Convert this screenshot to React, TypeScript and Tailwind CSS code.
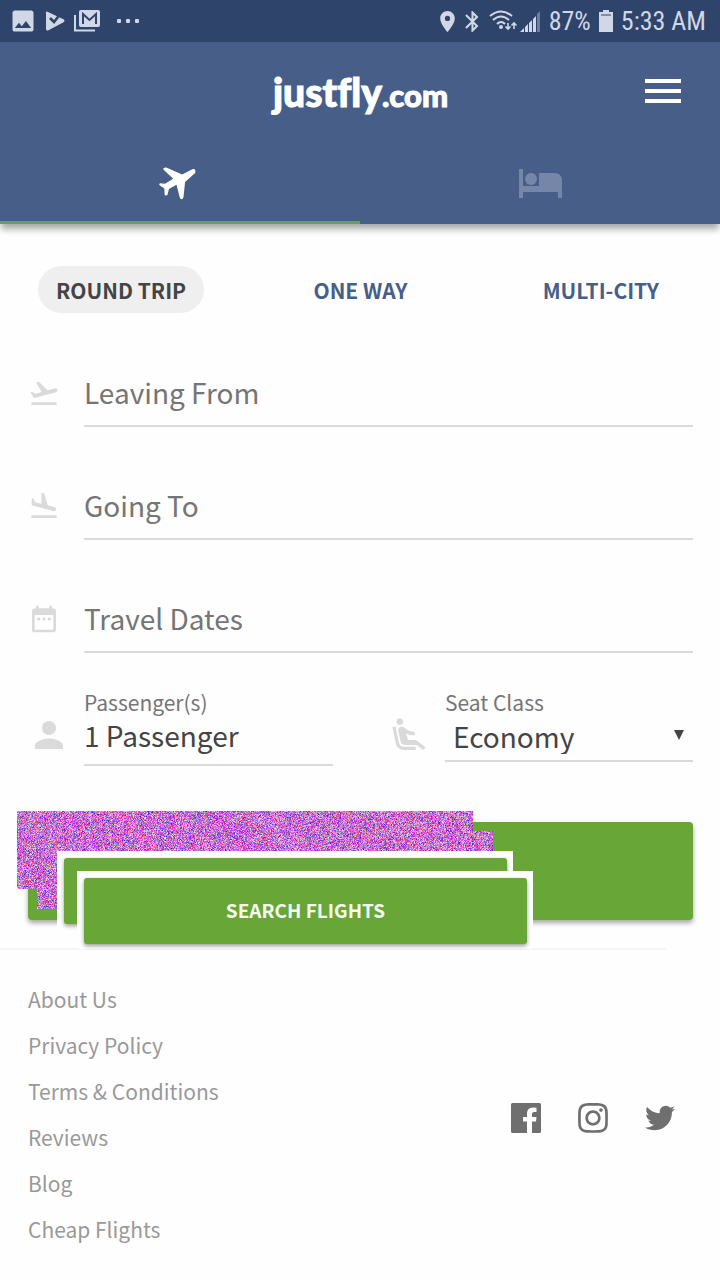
import { useEffect, useRef } from "react";
import type { ReactNode } from "react";
import {
  MdAirlineSeatReclineExtra,
  MdBluetooth,
  MdDateRange,
  MdFlightLand,
  MdFlightTakeoff,
  MdImage,
  MdLocationOn,
  MdPerson,
} from "react-icons/md";
import { FaInstagram, FaTwitter } from "react-icons/fa";

const sourceFont = "font-['Noto_Sans_CJK_SC','Noto_Sans',sans-serif]";

function Noise({ className }: { className: string }) {
  const ref = useRef<HTMLCanvasElement>(null);
  useEffect(() => {
    const canvas = ref.current;
    const ctx = canvas?.getContext("2d");
    if (!canvas || !ctx) return;
    let seed = 1234567;
    const random = () => {
      seed = (seed * 1664525 + 1013904223) >>> 0;
      return seed / 4294967296;
    };
    const image = ctx.createImageData(canvas.width, canvas.height);
    for (let i = 0; i < image.data.length; i += 4) {
      const red = 245 - 190 * random() * random();
      const blue = 245 - 150 * random() * random();
      image.data[i] = red;
      image.data[i + 1] = Math.min(red, blue) * (0.25 + 0.75 * random());
      image.data[i + 2] = blue;
      image.data[i + 3] = 255;
    }
    ctx.putImageData(image, 0, 0);
  }, []);
  return <canvas ref={ref} width={456} height={78} aria-hidden="true" className={className} />;
}

function StatusBar() {
  return (
    <div className="flex h-[42px] items-center bg-[#2f446a] pl-3 pr-[14px] font-['Roboto_Condensed',Roboto,sans-serif] text-[26px] leading-7 text-[#d0d7e6]">
      <MdImage className="-ml-[3px] size-7" />
      <svg viewBox="0 0 20 20" className="ml-2 size-5" fill="currentColor">
        <path d="M1 1Q1 0 3 1L19 8.500Q20 10 19 11L3 19.500Q1 20 1 18Z" />
        <path d="m5 7 4 4 7-9" fill="none" stroke="#2f446a" strokeWidth="2.600" />
      </svg>
      <svg viewBox="0 0 26 22" className="ml-[9px] h-[22px] w-[26px]" fill="none" stroke="currentColor">
        <path d="M1 5v15.500h20" strokeWidth="2" />
        <path d="M7 0h17q2 0 2 2v13q0 2-2 2H7q-2 0-2-2V2q0-2 2-2Z" fill="currentColor" stroke="none" />
        <path d="M9 14V4l6.500 6L22 4v10" stroke="#2f446a" strokeWidth="2" />
      </svg>
      <svg viewBox="0 0 24 6" className="ml-4 h-[6px] w-6" fill="currentColor">
        <rect x="1" y="1" width="4" height="4" rx="1" />
        <rect x="10" y="1" width="4" height="4" rx="1" />
        <rect x="19" y="1" width="4" height="4" rx="1" />
      </svg>
      <div className="ml-auto flex items-center">
        <MdLocationOn className="size-[25px]" />
        <MdBluetooth className="size-[25px]" />
        <svg viewBox="0 0 30 24" className="ml-1 h-6 w-[30px]" fill="none" stroke="currentColor" strokeWidth="2">
          <path d="M1 7q11-9 22 0M4 11q8-7 16 0M8 15q4-4 8 0" />
          <circle cx="12" cy="18" r="2" fill="currentColor" stroke="none" />
          <path d="M19 14v6m-2.500-2.500L19 20l2.500-2.500M25 20v-6m-2.500 2.500L25 14l2.500 2.500" strokeWidth="1.600" />
        </svg>
        <svg viewBox="0 0 22 22" className="h-[22px] w-[22px]" fill="currentColor">
          <path d="m1 22 4-4v4ZM6 22v-5l3-3v8ZM10 22v-9l3-3v12ZM14 22V9l3-3v16Z" />
          <path d="M18 22V4l3-3v21Z" opacity=".4" />
        </svg>
        <span className="ml-2">87%</span>
        <svg viewBox="0 0 14 22" className="mx-2 h-[22px] w-[14px]" fill="currentColor">
          <path d="M4 0h6v2h4v20H0V2h4Z" />
          <path d="M2 5h10" stroke="#2f446a" strokeWidth="1" />
        </svg>
        <span>5:33 AM</span>
      </div>
    </div>
  );
}

function Header() {
  return (
    <header className="relative bg-[#475e89] shadow-[0_6px_7px_-1px_rgba(0,0,0,0.35)]">
      <div className="grid h-[98px] grid-cols-[1fr_auto_1fr] items-center pr-[39px]">
        <span />
        <a href="#home" className="ml-10 flex items-baseline pt-1 font-[Lato,sans-serif] font-black leading-[48px] text-white [-webkit-text-stroke:1px_white] [font-variant-ligatures:none]">
          <span className="text-[39px]">justfly</span>
          <span className="text-[31px]">.com</span>
        </a>
        <button type="button" aria-label="Menu" className="justify-self-end text-white">
          <svg viewBox="0 0 36 24" className="h-6 w-9" fill="currentColor">
            <path d="M0 0h36v4H0ZM0 10h36v4H0ZM0 20h36v4H0Z" />
          </svg>
        </button>
      </div>
      <nav className="grid h-[84px] grid-cols-2">
        <a href="#flights" aria-label="Flights" className="flex items-center justify-center border-b-[3px] border-[#6d9d58] pt-[5px] text-white">
          <svg viewBox="0 0 112 102" className="-ml-[6px] h-[34px] w-[37px]" fill="currentColor">
            <path d="M70 25 98 11Q107 6 110 13q2 7-4 11L79 48l-5 46q-1 6-6 6-4 0-5-4L53 56 30 69l-4 17q-2 3-6 3-3 0-3-4l-1-17L1 57q-1-3 2-5l15 1 25-15-29-27q-3-3 0-5 4-3 8-2Z" />
          </svg>
        </a>
        <a href="#hotels" aria-label="Hotels" className="flex items-center justify-center pt-[3px] text-[#7586a8]">
          <svg viewBox="0 0 43 29" className="h-[29px] w-[43px]" fill="currentColor">
            <path d="M0 0h4v17h16V4h15q8 0 8 8v17h-4v-6H4v6H0Z" />
            <circle cx="12" cy="10" r="6" />
          </svg>
        </a>
      </nav>
    </header>
  );
}

function TextField({ icon, label, id }: { icon: ReactNode; label: string; id: string }) {
  return (
    <div className="flex h-[113px] items-center">
      <label htmlFor={id} aria-label={label} className="w-14 shrink-0 pt-px text-[#dadada]">{icon}</label>
      <input
        id={id}
        placeholder={label}
        className="h-[68px] min-w-0 flex-1 border-b-2 border-[#dadada] text-[28px] leading-10 text-[#444] outline-none placeholder:text-[#757575]"
      />
    </div>
  );
}

function SearchArea() {
  return (
    <div className="relative mt-[56px] h-[98px]">
      <div className="h-full rounded-[4px] bg-[#68a638] shadow-[0_3px_5px_rgba(0,0,0,0.35)]" />
      <Noise className="absolute -left-[11px] -top-[11px] h-[78px] w-[456px]" />
      <Noise className="absolute left-[9px] top-[9px] h-[78px] w-[456px]" />
      <div className="absolute left-[29px] top-[29px] h-[78px] w-[456px] bg-white pb-[5px] pl-[7px] pr-[6px] pt-[7px]">
        <div className="h-full rounded-[3px] bg-[#68a638] shadow-[0_2px_4px_rgba(0,0,0,0.4)]" />
      </div>
      <div className="absolute left-[49px] top-[49px] h-[78px] w-[456px] bg-white pb-[5px] pl-[7px] pr-[6px] pt-[7px]">
        <button
          type="submit"
          className="h-full w-full rounded-[3px] bg-[#68a638] pb-[2px] text-[19px] font-bold leading-7 text-[#f6fbf2] shadow-[0_2px_4px_rgba(0,0,0,0.4)]"
        >
          SEARCH FLIGHTS
        </button>
      </div>
    </div>
  );
}

const footerLinks = ["About Us", "Privacy Policy", "Terms & Conditions", "Reviews", "Blog", "Cheap Flights"];

export default function App() {
  return (
    <div className={`min-h-screen bg-[#fefefe] ${sourceFont}`}>
      <StatusBar />
      <Header />
      <main>
        <form className="pl-7 pr-[27px]" onSubmit={(e) => e.preventDefault()}>
          <div className="grid grid-cols-[1fr_auto_1fr] items-center pl-[10px] pr-[34px] pt-[42px] text-[21px] font-bold leading-7 text-[#475e89]">
            <button type="button" className="h-[47px] justify-self-start rounded-full bg-[#efefef] px-[18px] text-[#444]">ROUND TRIP</button>
            <button type="button" className="ml-6 h-[47px]">ONE WAY</button>
            <button type="button" className="h-[47px] justify-self-end">MULTI-CITY</button>
          </div>
          <div className="mt-[23px]">
            <TextField id="from" label="Leaving From" icon={<MdFlightTakeoff className="size-8" />} />
            <TextField id="to" label="Going To" icon={<MdFlightLand className="size-8" />} />
            <TextField id="dates" label="Travel Dates" icon={<MdDateRange className="size-8" />} />
          </div>
          <div className="grid grid-cols-[305px_1fr] gap-14 pt-[13px]">
            <div className="flex">
              <MdPerson className="mr-[14px] mt-[26px] size-[42px] shrink-0 text-[#dadada]" />
              <div className="flex min-w-0 flex-1 flex-col">
                <label htmlFor="passengers" className="text-[21px] leading-7 text-[#757575]">Passenger(s)</label>
                <input id="passengers" readOnly value="1 Passenger" className="h-[50px] w-full border-b-2 border-[#dadada] pb-[10px] text-[28px] leading-10 text-[#444] outline-none" />
              </div>
            </div>
            <div className="flex">
              <MdAirlineSeatReclineExtra className="mr-4 mt-[27px] size-10 shrink-0 text-[#dadada]" />
              <div className="flex min-w-0 flex-1 flex-col">
                <label htmlFor="seat" className="text-[21px] leading-7 text-[#757575]">Seat Class</label>
                <div className="relative">
                  <select id="seat" className="h-[46px] w-full appearance-none border-b-2 border-[#dadada] pb-[6px] pl-2 text-[28px] leading-10 text-[#444] outline-none">
                    <option>Economy</option>
                  </select>
                  <svg viewBox="0 0 10 10" className="pointer-events-none absolute right-[9px] top-[14px] size-[10px]" fill="#444">
                    <path d="M0 0h10L5 10Z" />
                  </svg>
                </div>
              </div>
            </div>
          </div>
          <SearchArea />
        </form>
      </main>
      <footer className="mt-7">
        <div className="mr-[54px] border-t-2 border-[#f4f4f4]" />
        <div className="flex items-center justify-between pl-7 pr-[45px] pt-[26px]">
          <ul className="text-[21px] leading-[46px] text-[#999]">
            {footerLinks.map((text) => (
              <li key={text}><a href="#footer">{text}</a></li>
            ))}
          </ul>
          <div className="flex items-center gap-[35px] pt-2 text-[#6f6f6f]">
            <a href="#facebook" aria-label="Facebook">
              <svg viewBox="0 0 30 30" className="size-[30px]" fill="currentColor">
                <path d="M1.500 0h27Q30 0 30 1.500v27q0 1.500-1.500 1.500H21V18.500h4l.500-4.500H21v-3q0-2 2-2h2.500V4.700Q24 4.500 22 4.500q-6 0-6 6V14h-4v4.500h4V30H1.500Q0 30 0 28.500v-27Q0 0 1.500 0Z" />
              </svg>
            </a>
            <a href="#instagram" aria-label="Instagram"><FaInstagram className="size-[34px]" /></a>
            <a href="#twitter" aria-label="Twitter"><FaTwitter className="size-[30px]" /></a>
          </div>
        </div>
      </footer>
    </div>
  );
}
